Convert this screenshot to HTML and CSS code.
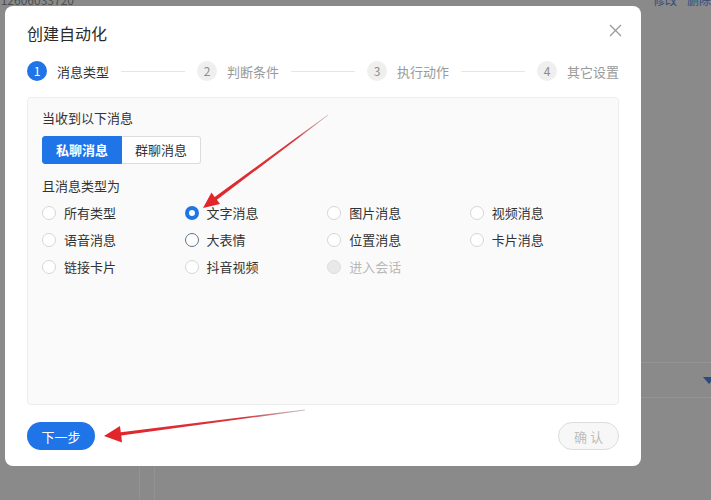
FILE: index.html
```html
<!DOCTYPE html>
<html lang="zh-CN">
<head>
    <meta charset="UTF-8">
    <meta name="viewport" content="width=device-width, initial-scale=1.0">
    <title>创建自动化</title>
    <link rel="stylesheet" href="styles.css">
</head>
<body>
    <!-- 底层页面（被遮罩） -->
    <div class="page">
        <div class="page-top">
            <span class="page-id">/12606033720</span>
            <span class="page-links"><a>修改</a><a>删除</a></span>
        </div>
        <div class="page-body">
            <div class="page-side"></div>
            <div class="page-gutter"></div>
            <div class="page-main">
                <div class="page-row"><span class="page-caret"></span></div>
            </div>
        </div>
    </div>

    <div class="overlay">
        <div class="modal">
            <div class="modal-header">
                <h1>创建自动化</h1>
                <svg class="close" width="13" height="13" viewBox="0 0 13 13">
                    <path d="M1 1L12 12M12 1L1 12" stroke="#9a9a9a" stroke-width="1.3" fill="none"/>
                </svg>
            </div>

            <div class="steps">
                <div class="step active"><span class="step-num">1</span><span class="step-text">消息类型</span></div>
                <div class="step-line"></div>
                <div class="step"><span class="step-num">2</span><span class="step-text">判断条件</span></div>
                <div class="step-line"></div>
                <div class="step"><span class="step-num">3</span><span class="step-text">执行动作</span></div>
                <div class="step-line"></div>
                <div class="step"><span class="step-num">4</span><span class="step-text">其它设置</span></div>
            </div>

            <div class="panel">
                <div class="label">当收到以下消息</div>
                <div class="segment">
                    <span class="seg seg-on">私聊消息</span>
                    <span class="seg">群聊消息</span>
                </div>
                <div class="label label-2">且消息类型为</div>
                <div class="radios">
                    <label class="radio"><span class="dot"></span>所有类型</label>
                    <label class="radio"><span class="dot dot-on"></span>文字消息</label>
                    <label class="radio"><span class="dot"></span>图片消息</label>
                    <label class="radio"><span class="dot"></span>视频消息</label>
                    <label class="radio"><span class="dot"></span>语音消息</label>
                    <label class="radio"><span class="dot dot-hover"></span>大表情</label>
                    <label class="radio"><span class="dot"></span>位置消息</label>
                    <label class="radio"><span class="dot"></span>卡片消息</label>
                    <label class="radio"><span class="dot"></span>链接卡片</label>
                    <label class="radio"><span class="dot"></span>抖音视频</label>
                    <label class="radio radio-off"><span class="dot dot-off"></span>进入会话</label>
                </div>
            </div>

            <div class="modal-footer">
                <button class="btn btn-primary">下一步</button>
                <button class="btn btn-disabled">确 认</button>
            </div>
        </div>
    </div>

    <!-- 标注箭头 -->
    <svg class="marks" width="711" height="500" viewBox="0 0 711 500">
        <defs>
            <linearGradient id="fade1" gradientUnits="userSpaceOnUse" x1="203" y1="208" x2="328" y2="115">
                <stop offset="0" stop-color="#e2242a"/>
                <stop offset="0.75" stop-color="#d8363a"/>
                <stop offset="1" stop-color="#b0a0a0" stop-opacity="0.6"/>
            </linearGradient>
            <linearGradient id="fade2" gradientUnits="userSpaceOnUse" x1="105" y1="436" x2="305" y2="410">
                <stop offset="0" stop-color="#e2242a"/>
                <stop offset="0.7" stop-color="#d8363a"/>
                <stop offset="1" stop-color="#a0a0a8" stop-opacity="0.6"/>
            </linearGradient>
        </defs>
        <polygon fill="url(#fade1)" points="203,208 220,204 216.9,199.8 328.3,115.2 327.7,114.8 214.7,197.0 211.5,192.6"/>
        <polygon fill="url(#fade2)" points="104,436 122,442.5 121.3,435.6 305,410.4 305,409.6 120.8,432.2 120,426"/>
    </svg>
</body>
</html>
```

FILE: styles.css
```css
* {
    box-sizing: border-box;
}

body {
    margin: 0;
    width: 711px;
    height: 500px;
    overflow: hidden;
    background-color: #8a8a8a;
    font-family: "Noto Sans CJK SC", "Liberation Sans", sans-serif;
    font-size: 13px;
    color: #333;
}

/* 底层页面 */
.page {
    height: 500px;
}

.page-top {
    height: 6px;
    display: flex;
    justify-content: space-between;
    align-items: flex-end;
    overflow: hidden;
    font-size: 12px;
    line-height: 12px;
}

.page-id {
    color: #4e4e4e;
    margin-left: -4px;
}

.page-links a {
    color: #2d4a78;
    margin-left: 10px;
}

.page-body {
    display: flex;
    height: 494px;
}

.page-side {
    width: 140px;
    border-right: 1px solid #939393;
}

.page-gutter {
    width: 15px;
    border-right: 1px solid #939393;
}

.page-main {
    flex: 1;
    padding-top: 356px;
}

.page-row {
    height: 36px;
    border-top: 1px solid #959595;
    border-bottom: 1px solid #959595;
    display: flex;
    justify-content: flex-end;
    align-items: center;
}

.page-caret {
    width: 0;
    height: 0;
    border-left: 6px solid transparent;
    border-right: 6px solid transparent;
    border-top: 7px solid #2d4a78;
    margin-right: -4px;
}

/* 弹窗 */
.overlay {
    position: fixed;
    top: 0;
    left: 0;
    right: 0;
    bottom: 0;
    padding: 6px 0 0 5px;
}

.modal {
    width: 636px;
    height: 460px;
    background-color: #ffffff;
    border-radius: 8px;
    padding: 16px 22px 16px 22px;
    display: flex;
    flex-direction: column;
}

.modal-header {
    display: flex;
    justify-content: space-between;
    align-items: center;
    height: 22px;
}

.modal-header h1 {
    margin: 0;
    font-size: 16px;
    font-weight: normal;
    color: #2b2b2b;
    line-height: 22px;
}

.close {
    margin-right: -3px;
    margin-top: -6px;
}

.steps {
    display: flex;
    align-items: center;
    height: 20px;
    margin-top: 17px;
}

.step {
    display: flex;
    align-items: center;
}

.step-num {
    width: 20px;
    height: 20px;
    border-radius: 50%;
    background-color: #efefef;
    color: #8c8c8c;
    font-size: 12px;
    line-height: 20px;
    text-align: center;
}

.step-text {
    margin-left: 10px;
    color: #9a9a9a;
    font-size: 13px;
}

.step.active .step-num {
    background-color: #1f74e8;
    color: #ffffff;
}

.step.active .step-text {
    color: #333;
}

.step-line {
    flex: 1;
    height: 1px;
    background-color: #e6e6e6;
    margin: 0 12px;
}

/* 内容面板 */
.panel {
    margin-top: 16px;
    height: 308px;
    background-color: #fafafa;
    border: 1px solid #ededed;
    border-radius: 4px;
    padding: 10px 14px;
}

.label {
    line-height: 20px;
    color: #333;
}

.label-2 {
    margin-top: 12px;
}

.segment {
    display: flex;
    margin-top: 8px;
}

.seg {
    height: 28px;
    line-height: 26px;
    padding: 0 13px;
    border: 1px solid #dcdcdc;
    background-color: #ffffff;
    color: #333;
}

.seg:first-child {
    border-radius: 3px 0 0 3px;
}

.seg:last-child {
    border-radius: 0 3px 3px 0;
    border-left: none;
}

.seg-on {
    width: 80px;
    text-align: center;
    background-color: #1f74e8;
    border-color: #1f74e8;
    color: #ffffff;
    font-weight: bold;
}

.radios {
    display: grid;
    grid-template-columns: repeat(4, 142.6px);
    grid-auto-rows: 27px;
    margin-top: 3px;
}

.radio {
    display: flex;
    align-items: center;
    color: #333;
}

.dot {
    width: 14px;
    height: 14px;
    border-radius: 50%;
    border: 1px solid #d6d6d6;
    background-color: #ffffff;
    margin-right: 8px;
}

.dot-on {
    border: 4px solid #1f74e8;
}

.dot-hover {
    border-color: #5f7185;
}

.dot-off {
    background-color: #e9e9e9;
    border-color: #dddddd;
}

.radio-off {
    color: #b8b8b8;
}

/* 底部按钮 */
.modal-footer {
    display: flex;
    justify-content: space-between;
    margin-top: 17px;
}

.btn {
    height: 28px;
    border-radius: 14px;
    font-family: inherit;
    font-size: 13px;
    padding: 0;
}

.btn-primary {
    width: 68px;
    background-color: #1f74e8;
    border: none;
    color: #ffffff;
}

.btn-disabled {
    width: 61px;
    background-color: #f7f7f7;
    border: 1px solid #dddddd;
    color: #bdbdbd;
}

.marks {
    position: fixed;
    top: 0;
    left: 0;
    pointer-events: none;
}
```
